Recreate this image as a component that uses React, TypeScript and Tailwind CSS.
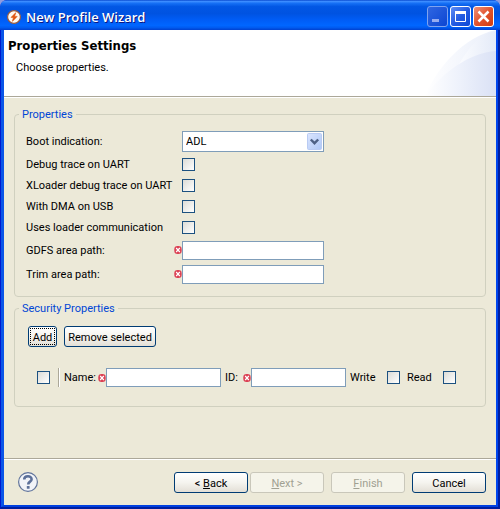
import React, { useId } from "react";

const groupClass =
  "rounded-[4px] border border-[#d0d0bf] min-w-0";
const legendClass = "px-[3px] leading-[15px] text-[#0046d5]";
const labelClass = "pt-[2px] whitespace-nowrap";
const inputClass = "h-[19px] border border-[#7f9db9] bg-white px-1 outline-none";
const buttonClass =
  "h-[21px] rounded-[3px] border border-[#003c74] bg-linear-to-b from-white via-[#f5f4ef] to-[#e3dfd6] leading-[17px] text-black";
const disabledClass =
  "h-[21px] rounded-[3px] border border-[#c9c7ba] bg-[#f5f4ea] leading-[17px] text-[#a1a192]";

function Check({ id, label }: { id?: string; label?: string }) {
  return (
    <input
      id={id}
      type="checkbox"
      aria-label={label}
      className="block size-[13px] shrink-0 appearance-none border border-[#1c5180] bg-linear-to-br from-[#dcdcd7] to-white checked:bg-[#21a121]"
    />
  );
}

function ErrorMark() {
  return (
    <svg viewBox="0 0 8 8" className="block h-2 w-2 shrink-0" aria-hidden="true">
      <rect x="0.3" y="0" width="7.4" height="8" rx="3.2" fill="#dc4255" />
      <path d="M2.2 2 L5.8 6 M5.8 2 L2.2 6" stroke="#fff" strokeWidth="1.2" />
    </svg>
  );
}

function CheckRow({ label }: { label: string }) {
  const id = useId();
  return (
    <div className="flex h-[21px] items-center">
      <label htmlFor={id} className={labelClass + " w-[156px]"}>{label}</label>
      <Check id={id} />
    </div>
  );
}

function PathRow({ label }: { label: string }) {
  const id = useId();
  return (
    <div className="flex h-6 items-center">
      <label htmlFor={id} className={labelClass + " w-[148px]"}>{label}</label>
      <ErrorMark />
      <input id={id} type="text" className={inputClass + " w-[142px]"} />
    </div>
  );
}

function TitleBar() {
  return (
    <div className="flex h-[30px] items-center rounded-t-[7px] bg-[linear-gradient(180deg,#0a4bd0_0%,#3b8cff_5%,#1670f5_11%,#0257e4_22%,#0053e1_45%,#005cf5_65%,#0066ff_85%,#005bf0_92%,#0040cf_100%)] pt-[3px] pr-[6px] pl-[7px]">
      <svg viewBox="0 0 14 14" className="mr-[5px] size-[14px]" aria-hidden="true">
        <circle cx="7" cy="7" r="6.4" fill="#fff" stroke="#9a5a3c" strokeWidth="1.2" />
        <circle cx="7" cy="7" r="5" fill="#fff8ee" />
        <path d="M8.8 2.6 L4 7.4 H6.4 L5.4 11.4 L10.2 6.4 H7.6 Z" fill="#e0540e" stroke="#e0540e" strokeWidth="0.6" />
      </svg>
      <h1 className="flex-1 font-['Open_Sans','Noto_Sans',sans-serif] text-[13px] leading-[18px] font-semibold text-white [text-shadow:1px_1px_#0a1883]">
        New Profile Wizard
      </h1>
      <div className="flex gap-[2px]">
        <button type="button" disabled aria-label="Minimize" className="size-[21px] rounded-[3px] border border-[#7fa3ef] bg-linear-to-br from-[#2f66e2] to-[#0b45d2]">
          <svg viewBox="0 0 19 19" className="block size-[19px]"><rect x="4" y="12" width="7" height="3" fill="#96acf0" /></svg>
        </button>
        <button type="button" aria-label="Maximize" className="size-[21px] rounded-[3px] border border-white bg-linear-to-br from-[#5f8df4] via-[#245ce2] to-[#0b48d6]">
          <svg viewBox="0 0 19 19" className="block size-[19px]">
            <path d="M4.5 5 V14.5 H14.5 V5" fill="none" stroke="#fff" />
            <rect x="4" y="4" width="11" height="3" fill="#fff" />
          </svg>
        </button>
        <button type="button" aria-label="Close" className="size-[21px] rounded-[3px] border border-white bg-linear-to-br from-[#ee9078] via-[#e1532d] to-[#d03c0c]">
          <svg viewBox="0 0 19 19" className="block size-[19px]"><path d="M4.5 4.5 L14.5 14.5 M14.5 4.5 L4.5 14.5" stroke="#fff" strokeWidth="2.5" /></svg>
        </button>
      </div>
    </div>
  );
}

function Banner() {
  return (
    <header className="flex h-[67px] justify-between border-b border-[#aca899] bg-white">
      <div className="pt-2 pl-1">
        <h2 className="font-['DejaVu_Sans_Condensed','DejaVu_Sans',sans-serif] text-[13px] leading-[16px] font-bold">Properties Settings</h2>
        <p className="pt-[7px] pl-2 leading-[14px]">Choose properties.</p>
      </div>
      <svg viewBox="0 0 75 66" className="block h-[66px] w-[75px]" aria-hidden="true">
        <defs>
          <linearGradient id="outer" x1="0" x2="1"><stop offset="0" stopColor="#fff" /><stop offset="1" stopColor="#e9eefa" /></linearGradient>
          <linearGradient id="inner" x1="0" x2="1"><stop offset="0" stopColor="#fcfdff" /><stop offset="1" stopColor="#e4eaf8" /></linearGradient>
          <linearGradient id="lower" x1="0" x2="1"><stop offset="0" stopColor="#fff" /><stop offset="0.5" stopColor="#edf1fb" /><stop offset="1" stopColor="#dae1f5" /></linearGradient>
        </defs>
        <path d="M4 66 C16 38 42 7 75 0 V66 Z" fill="url(#outer)" />
        <path d="M36 38 C47 18 58 4 75 1 V66 H36 Z" fill="url(#inner)" />
        <path d="M4 66 C22 42 48 23 75 21 V66 Z" fill="url(#lower)" />
      </svg>
    </header>
  );
}

function PropertiesGroup() {
  return (
    <fieldset className={groupClass + " pt-[7px] pr-3 pb-[10px] pl-[11px]"}>
      <legend className={legendClass + " -ml-[7px]"}>Properties</legend>
      <div className="flex h-[25px] items-center">
        <label htmlFor="boot" className={labelClass + " w-[156px]"}>Boot indication:</label>
        <div className="relative">
          <select id="boot" className="block h-[21px] w-[142px] appearance-none border border-[#7f9db9] bg-white pt-[2px] pr-5 pl-[3px] outline-none">
            <option>ADL</option>
          </select>
          <svg viewBox="0 0 15 17" className="pointer-events-none absolute top-[2px] right-[2px] h-[17px] w-[15px]" aria-hidden="true">
            <defs><linearGradient id="drop" x1="0" y1="0" x2="1" y2="1"><stop offset="0" stopColor="#dbe5fe" /><stop offset="1" stopColor="#aec8f7" /></linearGradient></defs>
            <rect x="0.5" y="0.5" width="14" height="16" rx="1" fill="url(#drop)" stroke="#b9cbf3" />
            <path d="M3.8 6.5 L7.5 10.2 L11.2 6.5" fill="none" stroke="#4d6185" strokeWidth="2.4" />
          </svg>
        </div>
      </div>
      <CheckRow label="Debug trace on UART" />
      <CheckRow label="XLoader debug trace on UART" />
      <CheckRow label="With DMA on USB" />
      <CheckRow label="Uses loader communication" />
      <PathRow label="GDFS area path:" />
      <PathRow label="Trim area path:" />
    </fieldset>
  );
}

function SecurityGroup() {
  return (
    <fieldset className={groupClass + " pt-[10px] pr-3 pb-[19px] pl-[13px]"}>
      <legend className={legendClass + " -ml-[9px]"}>Security Properties</legend>
      <div className="flex gap-[7px]">
        <button type="button" className={buttonClass + " w-[29px] p-px"}>
          <span className="block h-[17px] border border-dotted border-black">Add</span>
        </button>
        <button type="button" className={buttonClass + " w-[92px] pt-[2px]"}>Remove selected</button>
      </div>
      <div className="mt-[21px] flex h-[19px] items-center pl-[9px]">
        <Check label="Select row" />
        <span className="ml-2 h-[19px] w-[2px] shrink-0 border-r border-l border-r-white border-l-[#aca899]" />
        <label htmlFor="name" className={labelClass + " ml-1 w-[34px]"}>Name:</label>
        <ErrorMark />
        <input id="name" type="text" className={inputClass + " w-[115px]"} />
        <label htmlFor="ident" className={labelClass + " ml-1 w-[18px]"}>ID:</label>
        <ErrorMark />
        <input id="ident" type="text" className={inputClass + " w-[95px]"} />
        <label htmlFor="write" className={labelClass + " ml-1 w-[37px]"}>Write</label>
        <Check id="write" />
        <label htmlFor="read" className={labelClass + " ml-[7px] w-9"}>Read</label>
        <Check id="read" />
      </div>
    </fieldset>
  );
}

function Footer() {
  return (
    <footer className="flex h-[47px] items-center border-t border-t-[#aca899] pr-[10px] pl-[14px] shadow-[inset_0_1px_#fff]">
      <button type="button" aria-label="Help" className="size-5">
        <svg viewBox="0 0 20 20" className="block size-5">
          <circle cx="10" cy="10" r="9.4" fill="#f1f3f8" stroke="#61749b" strokeWidth="1.2" />
          <path d="M6.2 7.6 C6.2 3.2 13.6 3.2 13.6 7.2 C13.6 9.8 10.2 9.5 10.2 12.6" fill="none" stroke="#5c7099" strokeWidth="2.6" />
          <rect x="8.8" y="14" width="2.8" height="2.8" rx="0.6" fill="#5c7099" />
        </svg>
      </button>
      <div className="ml-auto flex gap-[7px]">
        <div className="flex gap-[2px]">
          <button type="button" className={buttonClass + " w-[74px] pt-[2px]"}>&lt; <u>B</u>ack</button>
          <button type="button" disabled className={disabledClass + " w-[74px] pt-[2px]"}><u>N</u>ext &gt;</button>
        </div>
        <button type="button" disabled className={disabledClass + " w-[74px] pt-[2px]"}><u>F</u>inish</button>
        <button type="button" className={buttonClass + " w-[74px] pt-[2px]"}>Cancel</button>
      </div>
    </footer>
  );
}

export default function App() {
  return (
    <div className="min-h-screen bg-[#8f9ce0] font-[Roboto,'DejaVu_Sans_Condensed',sans-serif] text-[11px] text-black">
      <div className="flex min-h-screen flex-col overflow-hidden rounded-t-[7px] bg-[#0040df]">
        <TitleBar />
        <div className="flex flex-1 flex-col border-r-2 border-b-2 border-l border-r-[#001ea0] border-b-[#001ea0] border-l-[#0019cf]">
          <div className="flex flex-1 flex-col border-r-2 border-b-2 border-l-3 border-r-[#0046ee] border-b-[#0040e0] border-l-[#0a55e8]">
            <div className="flex flex-1 flex-col bg-[#ece9d8]">
              <Banner />
              <main className="flex flex-1 flex-col gap-1 border-t border-white px-[10px] pt-[9px]">
                <PropertiesGroup />
                <SecurityGroup />
              </main>
              <Footer />
            </div>
          </div>
        </div>
      </div>
    </div>
  );
}
